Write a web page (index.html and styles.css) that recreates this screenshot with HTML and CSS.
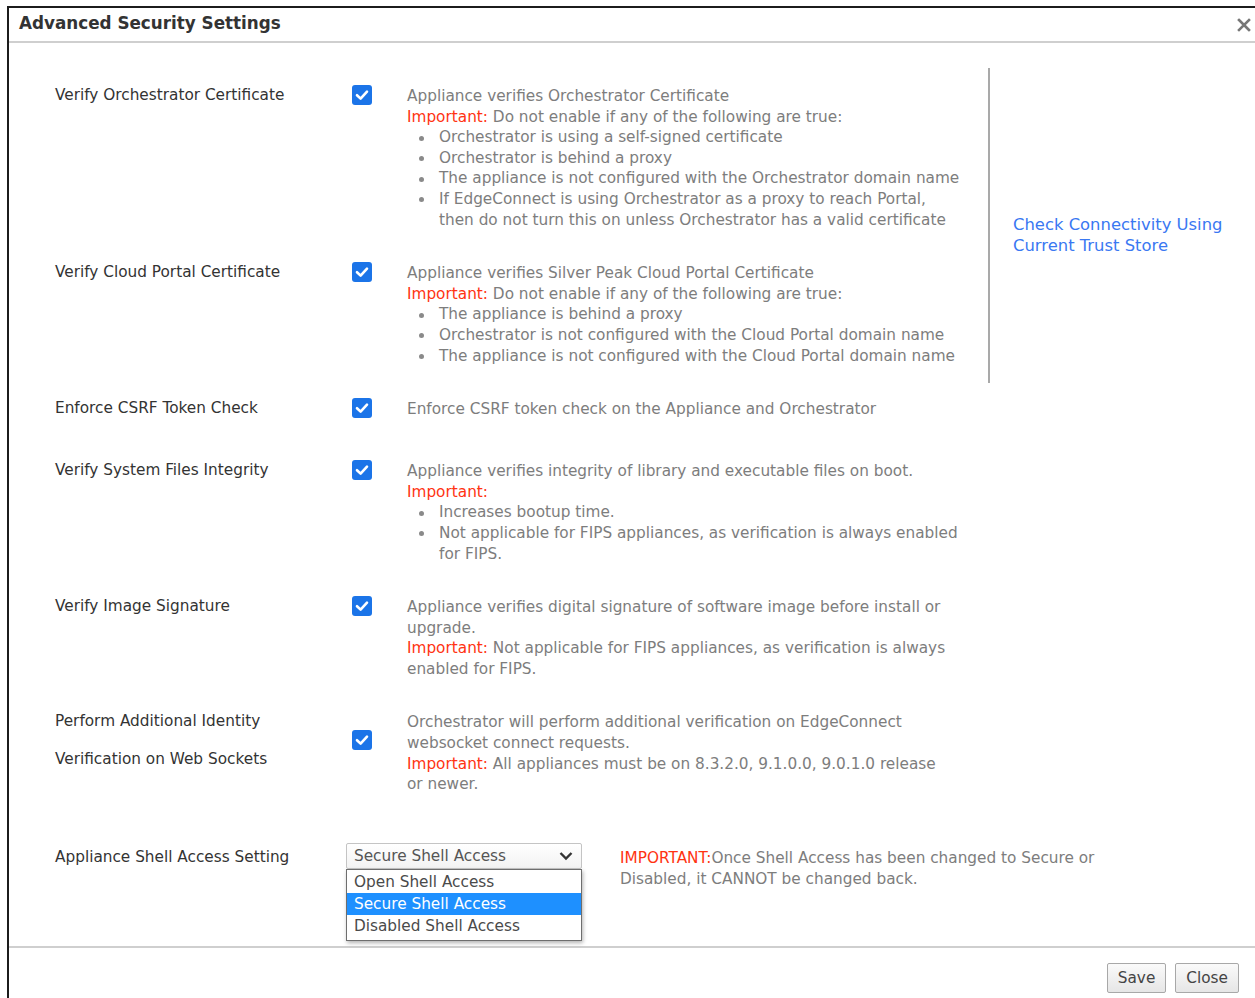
FILE: index.html
```html
<!DOCTYPE html>
<html lang="en">
<head>
<meta charset="utf-8">
<title>Advanced Security Settings</title>
<link rel="stylesheet" href="styles.css">
</head>
<body>
<div class="dialog">
  <div class="dialog-header">
    <span class="dialog-title">Advanced Security Settings</span>
    <span class="dialog-close" aria-label="Close">
      <svg width="14" height="14" viewBox="0 0 14 14"><path d="M2 2 L12 12 M12 2 L2 12" stroke="#777" stroke-width="2.6" stroke-linecap="square" fill="none"/></svg>
    </span>
  </div>

  <div class="dialog-body">
    <div class="cert-section">
      <div class="cert-rows">
        <div class="setting">
          <div class="setting-label">Verify Orchestrator Certificate</div>
          <div class="setting-check"><span class="checkbox"><svg viewBox="0 0 20 20" width="20" height="20"><path d="M5 10.2 L8.6 13.6 L15 6.6" stroke="#fff" stroke-width="2.6" fill="none" stroke-linecap="round" stroke-linejoin="round"/></svg></span></div>
          <div class="setting-desc">
            Appliance verifies Orchestrator Certificate<br>
            <span class="important">Important:</span> Do not enable if any of the following are true:
            <ul class="bullets">
              <li>Orchestrator is using a self-signed certificate</li>
              <li>Orchestrator is behind a proxy</li>
              <li>The appliance is not configured with the Orchestrator domain name</li>
              <li>If EdgeConnect is using Orchestrator as a proxy to reach Portal,<br>then do not turn this on unless Orchestrator has a valid certificate</li>
            </ul>
          </div>
        </div>
        <div class="setting">
          <div class="setting-label">Verify Cloud Portal Certificate</div>
          <div class="setting-check"><span class="checkbox"><svg viewBox="0 0 20 20" width="20" height="20"><path d="M5 10.2 L8.6 13.6 L15 6.6" stroke="#fff" stroke-width="2.6" fill="none" stroke-linecap="round" stroke-linejoin="round"/></svg></span></div>
          <div class="setting-desc">
            Appliance verifies Silver Peak Cloud Portal Certificate<br>
            <span class="important">Important:</span> Do not enable if any of the following are true:
            <ul class="bullets">
              <li>The appliance is behind a proxy</li>
              <li>Orchestrator is not configured with the Cloud Portal domain name</li>
              <li>The appliance is not configured with the Cloud Portal domain name</li>
            </ul>
          </div>
        </div>
      </div>
      <div class="cert-side">
        <a class="trust-link" href="#">Check Connectivity Using<br>Current Trust Store</a>
      </div>
    </div>

    <div class="setting setting-min">
      <div class="setting-label">Enforce CSRF Token Check</div>
      <div class="setting-check"><span class="checkbox"><svg viewBox="0 0 20 20" width="20" height="20"><path d="M5 10.2 L8.6 13.6 L15 6.6" stroke="#fff" stroke-width="2.6" fill="none" stroke-linecap="round" stroke-linejoin="round"/></svg></span></div>
      <div class="setting-desc">Enforce CSRF token check on the Appliance and Orchestrator</div>
    </div>

    <div class="setting">
      <div class="setting-label">Verify System Files Integrity</div>
      <div class="setting-check"><span class="checkbox"><svg viewBox="0 0 20 20" width="20" height="20"><path d="M5 10.2 L8.6 13.6 L15 6.6" stroke="#fff" stroke-width="2.6" fill="none" stroke-linecap="round" stroke-linejoin="round"/></svg></span></div>
      <div class="setting-desc">
        Appliance verifies integrity of library and executable files on boot.<br>
        <span class="important">Important:</span>
        <ul class="bullets">
          <li>Increases bootup time.</li>
          <li>Not applicable for FIPS appliances, as verification is always enabled<br>for FIPS.</li>
        </ul>
      </div>
    </div>

    <div class="setting">
      <div class="setting-label">Verify Image Signature</div>
      <div class="setting-check"><span class="checkbox"><svg viewBox="0 0 20 20" width="20" height="20"><path d="M5 10.2 L8.6 13.6 L15 6.6" stroke="#fff" stroke-width="2.6" fill="none" stroke-linecap="round" stroke-linejoin="round"/></svg></span></div>
      <div class="setting-desc">
        Appliance verifies digital signature of software image before install or<br>
        upgrade.<br>
        <span class="important">Important:</span> Not applicable for FIPS appliances, as verification is always<br>
        enabled for FIPS.
      </div>
    </div>

    <div class="setting setting-tall">
      <div class="setting-label setting-label-double">Perform Additional Identity<br>Verification on Web Sockets</div>
      <div class="setting-check setting-check-mid"><span class="checkbox"><svg viewBox="0 0 20 20" width="20" height="20"><path d="M5 10.2 L8.6 13.6 L15 6.6" stroke="#fff" stroke-width="2.6" fill="none" stroke-linecap="round" stroke-linejoin="round"/></svg></span></div>
      <div class="setting-desc">
        Orchestrator will perform additional verification on EdgeConnect<br>
        websocket connect requests.<br>
        <span class="important">Important:</span> All appliances must be on 8.3.2.0, 9.1.0.0, 9.0.1.0 release<br>
        or newer.
      </div>
    </div>

    <div class="setting setting-last">
      <div class="setting-label">Appliance Shell Access Setting</div>
      <div class="shell-control">
        <div class="select-wrap">
          <div class="select">
            <span>Secure Shell Access</span>
            <svg width="14" height="10" viewBox="0 0 14 10"><path d="M1.5 2 L7 7.5 L12.5 2" stroke="#333" stroke-width="2.4" fill="none"/></svg>
          </div>
          <ul class="select-menu">
            <li>Open Shell Access</li>
            <li class="selected">Secure Shell Access</li>
            <li>Disabled Shell Access</li>
          </ul>
        </div>
        <div class="shell-note"><span class="important">IMPORTANT:</span>Once Shell Access has been changed to Secure or<br>Disabled, it CANNOT be changed back.</div>
      </div>
    </div>
  </div>

  <div class="dialog-footer">
    <button class="btn" type="button">Save</button>
    <button class="btn" type="button">Close</button>
  </div>
</div>
</body>
</html>
```

FILE: styles.css
```css
html, body {
  margin: 0;
  padding: 0;
  background: #fff;
  overflow: hidden;
}

body {
  font-family: "DejaVu Sans", Verdana, sans-serif;
  font-size: 15.3px;
  color: #333;
}

.dialog {
  margin: 6px 0 0 7px;
  height: 992px;
  border-top: 2px solid #1c1c1c;
  border-left: 2px solid #1c1c1c;
  box-sizing: border-box;
}

/* header */
.dialog-header {
  height: 33px;
  border-bottom: 2px solid #cfcfcf;
  display: flex;
  align-items: center;
  justify-content: space-between;
  padding: 0 4px 0 10px;
}

.dialog-title {
  font-weight: bold;
  font-size: 16.8px;
  color: #333;
  margin-top: -4px;
}

.dialog-close {
  display: flex;
}

/* body */
.dialog-body {
  padding: 43px 0 0 46px;
  height: 903px;
  box-sizing: border-box;
  position: relative;
}

.cert-section {
  display: flex;
}

.cert-rows {
  width: 933px;
  flex: none;
}

.cert-side {
  margin: -18px 0 16px 0;
  border-left: 2px solid #a9a9a9;
  padding: 146px 0 0 23px;
}

.trust-link {
  display: block;
  color: #3a78f2;
  text-decoration: none;
  font-size: 16.4px;
  line-height: 21px;
}

.setting {
  display: grid;
  grid-template-columns: 297px 55px 575px;
  padding-bottom: 33px;
  box-sizing: border-box;
}

.setting-min {
  min-height: 62px;
}

.setting-tall {
  min-height: 136px;
}

.setting-label {
  line-height: 20.6px;
  margin-top: -1.5px;
  color: #333;
}

.setting-label-double {
  line-height: 38px;
  margin-top: -10.5px;
}

.setting-check {
  margin-top: -1.5px;
}

.setting-check-mid {
  margin-top: 18px;
}

.checkbox {
  display: block;
  width: 20px;
  height: 20px;
  border-radius: 3px;
  background: #1b74e8;
}

.checkbox svg {
  display: block;
}

.setting-desc {
  line-height: 20.6px;
  color: #7d7d7d;
  white-space: nowrap;
}

.important {
  color: #ff3311;
}

.bullets {
  list-style: none;
  margin: 0;
  padding: 0 0 0 32px;
}

.bullets li {
  position: relative;
}

.bullets li::before {
  content: "";
  position: absolute;
  left: -20px;
  top: 8.5px;
  width: 5px;
  height: 5px;
  border-radius: 50%;
  background: #8a8a8a;
}

/* shell access row */
.setting-last {
  padding-bottom: 0;
}

.shell-control {
  grid-column: 2 / 4;
  display: flex;
  gap: 38px;
  margin-left: -6px;
}

.select-wrap {
  position: relative;
  flex: none;
  width: 236px;
  margin-top: -5px;
}

.select {
  height: 26px;
  box-sizing: border-box;
  border: 1px solid #c4c4c4;
  border-radius: 2px;
  background: linear-gradient(#fff, #f3f3f3);
  display: flex;
  align-items: center;
  justify-content: space-between;
  padding: 0 8px 0 7px;
  color: #555;
  white-space: nowrap;
}

.select-menu {
  position: absolute;
  top: 26px;
  left: 0;
  width: 236px;
  box-sizing: border-box;
  margin: 0;
  padding: 1px 0 3px 0;
  list-style: none;
  background: #fff;
  border: 1px solid #6e6e6e;
  box-shadow: 1px 2px 4px rgba(0, 0, 0, 0.3);
  z-index: 2;
}

.select-menu li {
  height: 22px;
  line-height: 22px;
  padding-left: 7px;
  color: #4a4a4a;
  white-space: nowrap;
}

.select-menu li.selected {
  background: #1e90ff;
  color: #fff;
}

.shell-note {
  line-height: 20.6px;
  color: #7d7d7d;
  white-space: nowrap;
}

/* footer */
.dialog-footer {
  border-top: 2px solid #cfcfcf;
  display: flex;
  justify-content: flex-end;
  gap: 9px;
  padding: 15px 16px 0 0;
}

.btn {
  font-family: "DejaVu Sans", Verdana, sans-serif;
  font-size: 15.3px;
  color: #444;
  height: 30px;
  padding: 0 10px;
  border: 1px solid #a8a8a8;
  border-radius: 2px;
  background: linear-gradient(#fafafa, #e6e6e6);
}
```
